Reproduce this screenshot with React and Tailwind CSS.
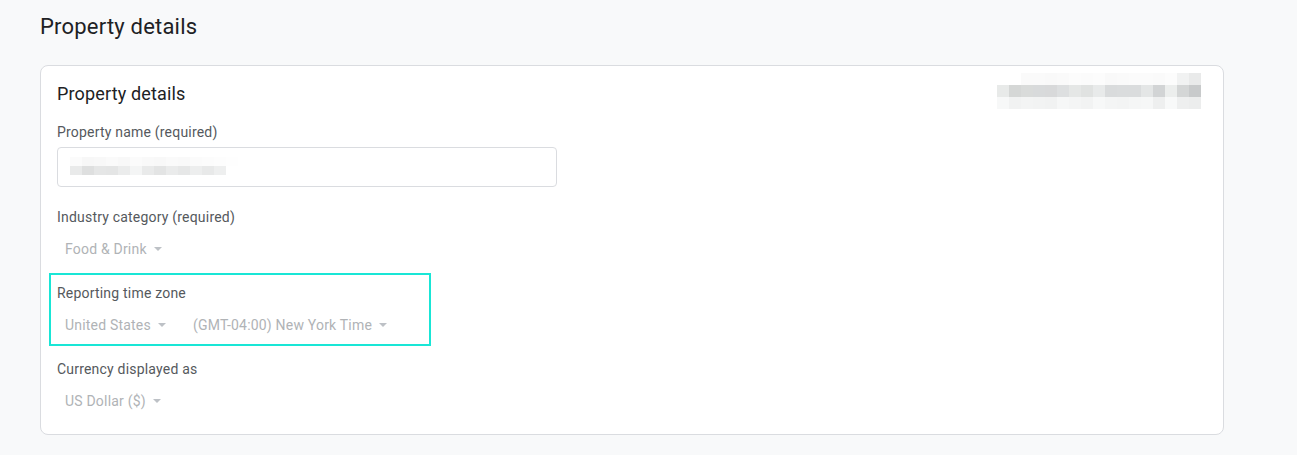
import React from "react";

const Caret = () => (
  <svg width="8" height="4" viewBox="0 0 8 4" className="ml-[7px] shrink-0">
    <path d="M0 0 L8 0 L4 4 Z" fill="#bdc1c6" />
  </svg>
);

const Select = ({ children, className = "" }) => (
  <div className={"flex items-center h-6 px-2 text-[14px] tracking-[0.2px] text-[#b0b3b6] " + className}>
    <span>{children}</span>
    <Caret />
  </div>
);

const Label = ({ children }) => (
  <div className="h-5 leading-5 text-[14px] tracking-[0.2px] text-[#55595d]">{children}</div>
);

const blurRows = [
  ["#ffffff", "#ffffff", "#fafafa", "#fafafa", "#f9f9f9", "#fafafa", "#fcfcfc", "#fbfbfb", "#fcfcfc", "#f9f9f9", "#fafafa", "#fbfbfb", "#fbfbfb", "#fafafa", "#fcfcfc", "#f1f2f2", "#e9eaea"],
  ["#e8eae9", "#d5d7d6", "#d9dbda", "#d8dadb", "#d8d9da", "#dddfe0", "#e5e7e6", "#e0e2e1", "#e8eaea", "#d9dbdc", "#dadcdd", "#dadcdd", "#e4e6e6", "#d2d4d5", "#eceeed", "#d4d6d6", "#c8cacb"],
  ["#f7f8f8", "#f1f2f2", "#f3f4f4", "#f2f3f3", "#f1f2f2", "#f6f7f7", "#f4f5f5", "#f2f3f3", "#f7f8f8", "#f4f5f5", "#f3f4f4", "#f5f6f6", "#f6f7f7", "#eeefef", "#f8f9f9", "#eeefef", "#eceded"],
];

const inputBlur = [
  ["#fbfbfb", "#f7f7f7", "#f8f8f8", "#fafafa", "#f8f8f8", "#fbfbfb", "#f9f9f9", "#f8f8f8", "#fafafa", "#f9f9f9", "#fbfbfb", "#fcfcfc", "#fdfdfd", "#fefefe", "#ffffff"],
  ["#e9eaea", "#dedfdf", "#e5e6e6", "#e4e5e5", "#ebecec", "#f4f5f5", "#e9eaea", "#e3e4e4", "#eaebeb", "#e6e7e7", "#edeeee", "#e8e9e9", "#eeefef", "#ffffff", "#ffffff"],
];

export default function App() {
  return (
    <div className="min-h-[455px] w-[1297px] bg-[#f8f9fa] pl-10 pt-[13px] font-['Roboto',sans-serif]">
      <h1 className="h-7 leading-7 text-[22px] tracking-[0.2px] text-[#202124] font-normal">Property details</h1>
      <div className="mt-6 w-[1184px] rounded-lg border border-[#dadce0] bg-white pl-4 pr-[22px] pt-[14px] pb-[21px]">
        <div className="flex items-start justify-between">
          <h2 className="h-7 leading-7 text-[18px] tracking-[0.15px] text-[#202124] font-normal">Property details</h2>
          <div className="-mt-[7px] flex flex-col">
            {blurRows.map((row, i) => (
              <div key={i} className="flex h-3">
                {row.map((c, j) => (
                  <div key={j} className="h-3 w-3" style={{ background: c }} />
                ))}
              </div>
            ))}
          </div>
        </div>

        <div className="mt-[13px]">
          <Label>Property name (required)</Label>
        </div>
        <div className="mt-[5px] flex h-10 w-[500px] flex-col justify-center rounded border border-[#dadce0] pl-3">
          <div className="-mt-[2px] flex flex-col">
            {inputBlur.map((row, i) => (
              <div key={i} className="flex h-[9px]">
                {row.map((c, j) => (
                  <div key={j} className="h-[9px] w-3" style={{ background: c }} />
                ))}
              </div>
            ))}
          </div>
        </div>

        <div className="mt-5">
          <Label>Industry category (required)</Label>
        </div>
        <div className="mt-[10px] flex">
          <Select>Food &amp; Drink</Select>
        </div>

        <div className="-ml-2 mt-3 w-[382px] border-2 border-[#19e6d6] pl-[6px] pt-2 pb-[7px]">
          <Label>Reporting time zone</Label>
          <div className="mt-[10px] flex">
            <Select className="w-[128px]">United States</Select>
            <Select>(GMT-04:00) New York Time</Select>
          </div>
        </div>

        <div className="mt-[13px]">
          <Label>Currency displayed as</Label>
        </div>
        <div className="mt-[10px] flex">
          <Select>US Dollar ($)</Select>
        </div>
      </div>
    </div>
  );
}
